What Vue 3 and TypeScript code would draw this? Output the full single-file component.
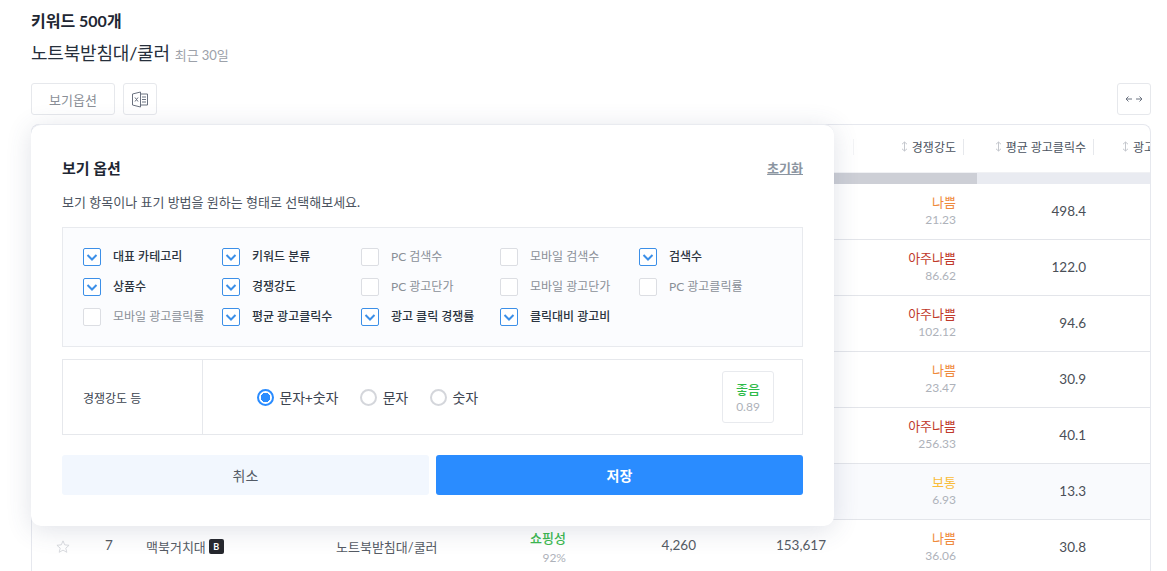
<script setup lang="ts">
interface Opt { label: string; on: boolean }
interface Row { grade: string; tone: string; score: string; clicks: string; hl?: boolean; star?: boolean }

const options: Opt[] = [
  { label: '대표 카테고리', on: true },
  { label: '키워드 분류', on: true },
  { label: 'PC 검색수', on: false },
  { label: '모바일 검색수', on: false },
  { label: '검색수', on: true },
  { label: '상품수', on: true },
  { label: '경쟁강도', on: true },
  { label: 'PC 광고단가', on: false },
  { label: '모바일 광고단가', on: false },
  { label: 'PC 광고클릭률', on: false },
  { label: '모바일 광고클릭률', on: false },
  { label: '평균 광고클릭수', on: true },
  { label: '광고 클릭 경쟁률', on: true },
  { label: '클릭대비 광고비', on: true },
]

const rows: Row[] = [
  { grade: '나쁨', tone: 'bad', score: '21.23', clicks: '498.4' },
  { grade: '아주나쁨', tone: 'worst', score: '86.62', clicks: '122.0' },
  { grade: '아주나쁨', tone: 'worst', score: '102.12', clicks: '94.6' },
  { grade: '나쁨', tone: 'bad', score: '23.47', clicks: '30.9' },
  { grade: '아주나쁨', tone: 'worst', score: '256.33', clicks: '40.1' },
  { grade: '보통', tone: 'mid', score: '6.93', clicks: '13.3', hl: true },
  { grade: '나쁨', tone: 'bad', score: '36.06', clicks: '30.8', star: true },
]

const radios = [
  { label: '문자+숫자', on: true },
  { label: '문자', on: false },
  { label: '숫자', on: false },
]
</script>

<template>
  <div class="page">
    <h1 class="count">키워드 500개</h1>
    <div class="heading">
      <span class="cat">노트북받침대/쿨러</span>
      <span class="period">최근 30일</span>
    </div>

    <div class="toolbar">
      <button class="tool wide" type="button">보기옵션</button>
      <button class="tool square" type="button" aria-label="엑셀">
        <svg width="18" height="17" viewBox="0 0 18 17" fill="none" stroke="#6b7280" stroke-width="1">
          <path d="M1.5 3 L9.5 1 V16 L1.5 14 Z" />
          <path d="M9.5 3 H16.5 V14 H9.5" />
          <path d="M11 6 H15 M11 8.5 H15 M11 11 H15" />
          <path d="M4 6.5 L7 10.5 M7 6.5 L4 10.5" />
        </svg>
      </button>
      <button class="tool square push" type="button" aria-label="넓게 보기">
        <svg width="18" height="10" viewBox="0 0 18 10" fill="none" stroke="#6b7280" stroke-width="1">
          <path d="M1 5 H7 M3.5 2.5 L1 5 L3.5 7.5" />
          <path d="M11 5 H17 M14.5 2.5 L17 5 L14.5 7.5" />
        </svg>
      </button>
    </div>

    <div class="stage">
      <div class="table">
        <div class="grid head">
          <div class="hcell blank"></div>
          <div class="hcell">
            <svg class="sort" width="7" height="11" viewBox="0 0 7 11" fill="none" stroke="#c4c7cd"><path d="M3.5 1 V10 M1 3.2 L3.5 1 L6 3.2 M1 7.8 L3.5 10 L6 7.8" /></svg>
            경쟁강도
          </div>
          <div class="hcell">
            <svg class="sort" width="7" height="11" viewBox="0 0 7 11" fill="none" stroke="#c4c7cd"><path d="M3.5 1 V10 M1 3.2 L3.5 1 L6 3.2 M1 7.8 L3.5 10 L6 7.8" /></svg>
            평균 광고클릭수
          </div>
          <div class="hcell clip">
            <svg class="sort" width="7" height="11" viewBox="0 0 7 11" fill="none" stroke="#c4c7cd"><path d="M3.5 1 V10 M1 3.2 L3.5 1 L6 3.2 M1 7.8 L3.5 10 L6 7.8" /></svg>
            광고 클릭 경쟁률
          </div>
        </div>
        <div class="scroll"><div class="thumb"></div></div>
        <div v-for="(r, i) in rows" :key="i" class="grid row" :class="{ hl: r.hl }">
          <div class="lead">
            <template v-if="r.star">
              <svg class="star" width="14" height="13" viewBox="0 0 16 15" fill="none" stroke="#d3d5da" stroke-width="1">
                <path d="M8 1 L10 5.6 L15 6.1 L11.2 9.4 L12.4 14.2 L8 11.7 L3.6 14.2 L4.8 9.4 L1 6.1 L6 5.6 Z" />
              </svg>
              <span class="rank">7</span>
              <span class="kw">맥북거치대<b class="badge">B</b></span>
              <span class="rowcat">노트북받침대/쿨러</span>
              <span class="shop"><em>쇼핑성</em><small>92%</small></span>
              <span class="num n1">4,260</span>
              <span class="num n2">153,617</span>
            </template>
          </div>
          <div class="cell grade">
            <span :class="r.tone">{{ r.grade }}</span>
            <small>{{ r.score }}</small>
          </div>
          <div class="cell value">{{ r.clicks }}</div>
          <div class="cell"></div>
        </div>
      </div>

      <section class="modal">
        <header class="mhead">
          <h2>보기 옵션</h2>
          <a class="reset">초기화</a>
        </header>
        <p class="desc">보기 항목이나 표기 방법을 원하는 형태로 선택해보세요.</p>

        <div class="checks">
          <label v-for="o in options" :key="o.label" class="check" :class="{ on: o.on }">
            <span class="box">
              <svg v-if="o.on" width="12" height="9" viewBox="0 0 12 9" fill="none" stroke="#3b8fe8" stroke-width="2">
                <path d="M1.5 2 L6 6.5 L10.5 2" />
              </svg>
            </span>
            {{ o.label }}
          </label>
        </div>

        <div class="format">
          <div class="flabel">경쟁강도 등</div>
          <div class="fbody">
            <div class="radios">
              <span v-for="r in radios" :key="r.label" class="radio">
                <i :class="{ sel: r.on }"></i>{{ r.label }}
              </span>
            </div>
            <div class="sample">
              <strong>좋음</strong>
              <span>0.89</span>
            </div>
          </div>
        </div>

        <div class="actions">
          <button class="cancel" type="button">취소</button>
          <button class="save" type="button">저장</button>
        </div>
      </section>
    </div>
  </div>
</template>

<style>
html, body { margin: 0; overflow: hidden; background: #fff; }
</style>

<style scoped>
.page {
  height: 571px;
  overflow: hidden;
  box-sizing: border-box;
  padding: 11px 16px 0 31px;
  font-family: Lato, "Noto Sans CJK KR", sans-serif;
  color: #1f2937;
}
.count {
  margin: 0;
  font-size: 16px;
  font-weight: 700;
  line-height: 20px;
  color: #1e2733;
}
.heading {
  margin-top: 10px;
  display: flex;
  align-items: baseline;
  gap: 5px;
  line-height: 24px;
}
.cat { font-size: 18px; color: #27303c; letter-spacing: -0.2px; }
.period { font-size: 13px; color: #9ca1a9; letter-spacing: -0.1px; }
.toolbar {
  margin-top: 16px;
  display: flex;
  gap: 8px;
  height: 32px;
}
.tool {
  border: 1px solid #e6e8ec;
  border-radius: 3px;
  background: #fff;
  font: inherit;
  font-size: 13px;
  color: #8a8f97;
  padding: 0;
  display: flex;
  align-items: center;
  justify-content: center;
  box-sizing: border-box;
}
.wide { width: 84px; }
.square { width: 34px; }
.push { margin-left: auto; }
.stage {
  position: relative;
  margin-top: 9px;
}
.table {
  border: 1px solid #e6e8ee;
  border-bottom: 0;
  border-radius: 8px 8px 0 0;
  overflow: hidden;
  box-sizing: border-box;
  height: 500px;
}
.grid {
  display: grid;
  grid-template-columns: 822px 110px 130px 130px;
}
.head { height: 47px; align-items: center; padding-bottom: 4px; box-sizing: border-box; }
.hcell {
  height: 16px;
  display: flex;
  align-items: center;
  justify-content: flex-end;
  gap: 4px;
  padding-right: 7px;
  border-right: 1px solid #e6e8ec;
  font-size: 12px;
  color: #4b5360;
  white-space: nowrap;
  box-sizing: content-box;
  margin-left: 1px;
}
.hcell.blank { border-right-color: #f3f4f6; }
.hcell.clip { justify-content: flex-start; padding-left: 27px; border-right: 0; padding-right: 0; overflow: hidden; }
.scroll {
  height: 12px;
  background: #e9ebf1;
  border-top: 1px solid #f0f1f4;
  box-sizing: border-box;
}
.thumb { width: 945px; height: 100%; background: #cdcfd6; }
.row {
  height: 56px;
  padding-bottom: 2px;
  border-bottom: 1px solid #e3e5ea;
  box-sizing: border-box;
  align-items: center;
}
.row.hl { background: #f9fafd; }
.row:last-child { border-bottom: 0; }
.lead {
  position: relative;
  height: 100%;
  font-size: 13px;
  color: #555b64;
}
.star { position: absolute; left: 24px; top: 20px; }
.rank { position: absolute; left: 73px; top: 17px; font-size: 13.5px; }
.kw { position: absolute; left: 114px; top: 17px; display: flex; align-items: center; gap: 3px; white-space: nowrap; }
.badge {
  width: 15px;
  height: 15px;
  border-radius: 2px;
  background: #26282e;
  color: #fff;
  font-size: 9px;
  font-weight: 700;
  display: flex;
  align-items: center;
  justify-content: center;
}
.rowcat { position: absolute; left: 304px; top: 17px; white-space: nowrap; }
.shop {
  position: absolute;
  right: 288px;
  top: 9px;
  display: flex;
  flex-direction: column;
  align-items: flex-end;
  line-height: 19px;
}
.shop em { font-style: normal; font-weight: 500; color: #3cb950; }
.shop small { font-size: 12px; color: #aeb2ba; }
.num { position: absolute; top: 17px; font-size: 13.5px; }
.n1 { right: 158px; }
.n2 { right: 28px; }
.cell { padding-right: 8px; text-align: right; }
.grade {
  display: flex;
  flex-direction: column;
  align-items: flex-end;
  line-height: 18px;
  font-size: 13px;
}
.grade small { font-size: 12px; color: #aeb2ba; }
.bad { color: #ef8a3d; }
.worst { color: #c0392b; }
.mid { color: #f9bd3a; }
.value { font-size: 13.5px; color: #4a4f57; }

.modal {
  position: absolute;
  left: 0;
  top: 0;
  width: 803px;
  height: 402px;
  box-sizing: border-box;
  padding: 30px 31px 0;
  background: #fff;
  border-radius: 10px;
  border-top: 1px solid #e9ebf0;
  box-shadow: 0 4px 26px rgba(60, 75, 110, 0.16);
}
.mhead {
  display: flex;
  justify-content: space-between;
  align-items: center;
  height: 24px;
}
.mhead h2 {
  margin: 0;
  font-size: 15px;
  font-weight: 700;
  color: #1e2733;
}
.reset {
  font-size: 13px;
  font-weight: 700;
  color: #8b95a1;
  text-decoration: underline;
}
.desc {
  margin: 12px 0 0;
  font-size: 13px;
  line-height: 22px;
  color: #4b5360;
}
.checks {
  margin-top: 14px;
  height: 120px;
  box-sizing: border-box;
  border: 1px solid #e8eaee;
  background: #fbfcfe;
  padding: 20px 0 0 20px;
  display: grid;
  grid-template-columns: repeat(5, 139px);
  grid-auto-rows: 30px;
}
.check {
  display: flex;
  align-items: flex-start;
  gap: 12px;
  font-size: 12px;
  line-height: 18px;
  color: #8a8f97;
  white-space: nowrap;
}
.check.on { color: #2b3440; font-weight: 500; }
.box {
  width: 18px;
  height: 18px;
  flex: none;
  box-sizing: border-box;
  border: 1px solid #dcdee3;
  border-radius: 2px;
  background: #fff;
  display: flex;
  align-items: center;
  justify-content: center;
}
.check.on .box { border-color: #3b8fe8; }
.format {
  margin-top: 12px;
  height: 76px;
  box-sizing: border-box;
  border: 1px solid #e6e8ec;
  display: flex;
}
.flabel {
  width: 140px;
  box-sizing: border-box;
  padding-left: 20px;
  border-right: 1px solid #e6e8ec;
  font-size: 12px;
  color: #3c4450;
  display: flex;
  align-items: center;
}
.fbody {
  flex: 1;
  display: flex;
  align-items: center;
  justify-content: space-between;
  padding: 0 28px 0 54px;
}
.radios { display: flex; gap: 22px; }
.radio {
  display: flex;
  align-items: center;
  gap: 5.5px;
  font-size: 14px;
  letter-spacing: -0.2px;
  color: #3c4450;
}
.radio i {
  width: 17px;
  height: 17px;
  box-sizing: border-box;
  border: 2px solid #d4d6db;
  border-radius: 50%;
  background: #fff;
}
.radio i.sel {
  border-color: #2a8cff;
  background: radial-gradient(circle, #2a8cff 0 4.5px, #fff 5px);
}
.sample {
  width: 52px;
  height: 52px;
  box-sizing: border-box;
  padding-top: 2px;
  border: 1px solid #e8eaee;
  border-radius: 3px;
  display: flex;
  flex-direction: column;
  align-items: center;
  justify-content: center;
  line-height: 17px;
}
.sample strong { font-size: 13px; font-weight: 500; color: #2fbb4a; }
.sample span { font-size: 12px; color: #aeb2ba; }
.actions {
  margin-top: 20px;
  display: grid;
  grid-template-columns: 1fr 1fr;
  gap: 7px;
}
.actions button {
  height: 40px;
  border: 0;
  border-radius: 3px;
  font: inherit;
  font-size: 14px;
}
.cancel { background: #f2f7fe; color: #525a65; }
.save { background: #2a8cff; color: #fff; font-weight: 700 !important; }
</style>
